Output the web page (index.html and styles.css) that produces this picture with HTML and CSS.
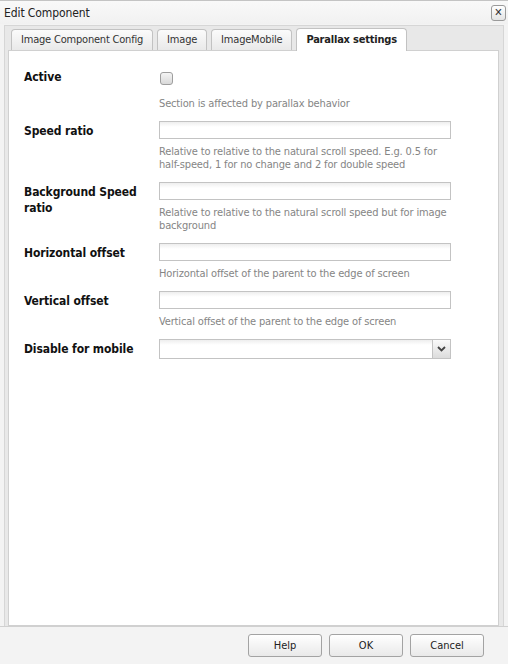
FILE: index.html
```html
<!DOCTYPE html>
<html lang="en">
  <head>
    <meta charset="UTF-8" />
    <meta name="viewport" content="width=device-width, initial-scale=1.0" />
    <title>Edit Component</title>
    <link rel="stylesheet" href="styles.css">
  </head>
  <body>
    <div class="window">
      <div class="window-header">
        <span class="window-title">Edit Component</span>
        <span class="close-btn">&#x2715;</span>
      </div>

      <div class="tab-panel">
        <ul class="tab-strip">
          <li class="tab">Image Component Config</li>
          <li class="tab">Image</li>
          <li class="tab">ImageMobile</li>
          <li class="tab active">Parallax settings</li>
        </ul>

        <div class="tab-body">
          <div class="form-row">
            <label class="form-label">Active</label>
            <div class="form-field">
              <div class="check-wrap"><span class="checkbox"></span></div>
              <div class="hint">Section is affected by parallax behavior</div>
            </div>
          </div>

          <div class="form-row">
            <label class="form-label">Speed ratio</label>
            <div class="form-field">
              <input class="text-input" type="text">
              <div class="hint">Relative to relative to the natural scroll speed. E.g. 0.5 for half-speed, 1 for no change and 2 for double speed</div>
            </div>
          </div>

          <div class="form-row">
            <label class="form-label">Background Speed ratio</label>
            <div class="form-field">
              <input class="text-input" type="text">
              <div class="hint">Relative to relative to the natural scroll speed but for image background</div>
            </div>
          </div>

          <div class="form-row">
            <label class="form-label">Horizontal offset</label>
            <div class="form-field">
              <input class="text-input" type="text">
              <div class="hint">Horizontal offset of the parent to the edge of screen</div>
            </div>
          </div>

          <div class="form-row">
            <label class="form-label">Vertical offset</label>
            <div class="form-field">
              <input class="text-input" type="text">
              <div class="hint">Vertical offset of the parent to the edge of screen</div>
            </div>
          </div>

          <div class="form-row">
            <label class="form-label">Disable for mobile</label>
            <div class="form-field">
              <div class="combo">
                <span class="combo-text"></span>
                <span class="combo-trigger">
                  <svg width="9" height="6" viewBox="0 0 9 6"><path d="M1 1 L4.5 4.5 L8 1" fill="none" stroke="#444" stroke-width="1.8"/></svg>
                </span>
              </div>
            </div>
          </div>
        </div>
      </div>

      <div class="window-footer">
        <button class="btn">Help</button>
        <button class="btn">OK</button>
        <button class="btn">Cancel</button>
      </div>
    </div>
  </body>
</html>
```

FILE: styles.css
```css
body {
  margin: 0;
  font-family: "DejaVu Sans Condensed", "DejaVu Sans", sans-serif;
  font-size: 11px;
  color: #000;
  background: #fff;
}
.window {
  width: 508px;
  height: 664px;
  box-sizing: border-box;
  display: flex;
  flex-direction: column;
  background: #f3f3f3;
  border-top: 1px solid #c4c4c4;
}
.window-header {
  height: 23px;
  display: flex;
  align-items: center;
  justify-content: space-between;
  padding: 0 2px 0 4px;
  background: linear-gradient(#f9f9f9, #f1f1f1);
}
.window-title {
  font-size: 12px;
  color: #222;
  letter-spacing: -0.1px;
}
.close-btn {
  width: 13px;
  height: 14px;
  line-height: 14px;
  text-align: center;
  font-size: 11px;
  color: #333;
  border: 1px solid #9a9a9a;
  border-radius: 3px;
  background: linear-gradient(#ffffff, #e4e4e4);
}
.tab-panel {
  flex: 1;
  margin: 1px 4px 0 4px;
  display: flex;
  flex-direction: column;
  background: #e8e8e8;
  border: 1px solid #d6d6d6;
  border-bottom: none;
}
.tab-strip {
  list-style: none;
  margin: 0;
  padding: 2px 0 0 6px;
  display: flex;
  align-items: flex-end;
  gap: 4px;
}
.tab {
  height: 20px;
  line-height: 20px;
  padding: 0 9px;
  color: #333;
  letter-spacing: -0.2px;
  border: 1px solid #c2c2c2;
  border-bottom: none;
  border-radius: 4px 4px 0 0;
  background: linear-gradient(#fbfbfb, #e9e9e9);
}
.tab.active {
  height: 22px;
  line-height: 22px;
  padding: 0 9px;
  font-weight: bold;
  color: #222;
  background: #fff;
  margin-bottom: -1px;
  position: relative;
}
.tab-body {
  flex: 1;
  margin: 0 4px 0 3px;
  padding: 16px 16px 0 15px;
  background: #fff;
  border: 1px solid #d0d0d0;
}
.form-row {
  display: flex;
  margin-bottom: 11px;
}
.form-label {
  width: 135px;
  flex: none;
  padding: 2px 12px 0 0;
  box-sizing: border-box;
  font-size: 12px;
  font-weight: bold;
  line-height: 16px;
  letter-spacing: -0.1px;
  color: #111;
}
.form-field {
  width: 292px;
}
.check-wrap {
  height: 24px;
  padding-top: 5px;
  box-sizing: border-box;
}
.checkbox {
  display: block;
  width: 11px;
  height: 11px;
  margin-left: 1px;
  border: 1px solid #9e9e9e;
  border-radius: 3px;
  background: linear-gradient(#f4f4f4, #d9d9d9);
}
.text-input {
  display: block;
  width: 292px;
  height: 18px;
  box-sizing: border-box;
  margin: 0;
  padding: 0 3px;
  border: 1px solid #c3c3c3;
  background: linear-gradient(#eeeeee, #ffffff 5px);
  font: inherit;
}
.hint {
  margin-top: 6px;
  line-height: 13px;
  letter-spacing: -0.15px;
  color: #858585;
}
.combo {
  display: flex;
  height: 20px;
  box-sizing: border-box;
  border: 1px solid #c3c3c3;
  background: linear-gradient(#eeeeee, #ffffff 5px);
}
.combo-text {
  flex: 1;
}
.combo-trigger {
  width: 17px;
  display: flex;
  align-items: center;
  justify-content: center;
  border-left: 1px solid #c3c3c3;
  background: linear-gradient(#fafafa, #dcdcdc);
}
.window-footer {
  height: 38px;
  display: flex;
  justify-content: flex-end;
  align-items: flex-start;
  gap: 7px;
  padding: 7px 24px 0 0;
  box-sizing: border-box;
  border-top: 1px solid #d0d0d0;
}
.btn {
  width: 74px;
  height: 23px;
  padding: 0;
  font: inherit;
  color: #222;
  border: 1px solid #a3a3a3;
  border-radius: 3px;
  background: linear-gradient(#ffffff, #e9e9e9);
}
```
